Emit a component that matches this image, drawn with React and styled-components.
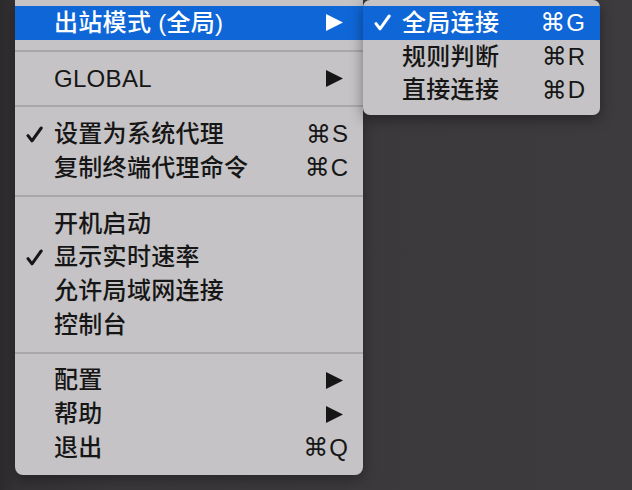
import styled, { createGlobalStyle } from 'styled-components'

const GlobalStyle = createGlobalStyle`
  html, body {
    margin: 0;
    padding: 0;
    background: #3d3a3d;
  }
  #root {
    width: 632px;
    height: 490px;
    overflow: hidden;
  }
`

const mainItems = [
  { label: '出站模式 (全局)', arrow: true, active: true },
  { sep: true },
  { label: 'GLOBAL', arrow: true },
  { sep: true },
  { label: '设置为系统代理', checked: true, key: 'S' },
  { label: '复制终端代理命令', key: 'C' },
  { sep: true },
  { label: '开机启动' },
  { label: '显示实时速率', checked: true },
  { label: '允许局域网连接' },
  { label: '控制台' },
  { sep: true },
  { label: '配置', arrow: true },
  { label: '帮助', arrow: true },
  { label: '退出', key: 'Q' },
]

const subItems = [
  { label: '全局连接', checked: true, key: 'G', active: true },
  { label: '规则判断', key: 'R' },
  { label: '直接连接', key: 'D' },
]

const Check = () => (
  <svg width='17' height='17' viewBox='0 0 17 17'>
    <path d='M2 9.6 L6 14.8 L15.2 2' fill='none' stroke='currentColor' strokeWidth='3' strokeLinecap='round' strokeLinejoin='round' />
  </svg>
)

const Arrow = () => (
  <svg width='17' height='17' viewBox='0 0 17 17'>
    <polygon points='0,0 17,8.5 0,17' fill='currentColor' />
  </svg>
)

const MenuItems = ({ items, gap }) =>
  items.map((item, i) =>
    item.sep ? (
      <Separator key={i} />
    ) : (
      <Row key={i} active={item.active}>
        <CheckSlot>{item.checked && <Check />}</CheckSlot>
        <Label>{item.label}</Label>
        {item.key && (
          <Shortcut gap={gap}>
            <Cmd>⌘</Cmd>
            {item.key}
          </Shortcut>
        )}
        {item.arrow && (
          <ArrowSlot>
            <Arrow />
          </ArrowSlot>
        )}
      </Row>
    )
  )

const App = () => {
  return (
    <>
      <GlobalStyle />
      <Desktop>
        <MainMenu>
          <MenuItems items={mainItems} />
        </MainMenu>
        <SubMenu>
          <MenuItems items={subItems} gap={38} />
        </SubMenu>
      </Desktop>
    </>
  )
}

const Desktop = styled.div`
  width: 632px;
  height: 490px;
  display: flex;
  align-items: flex-start;
  padding-left: 15px;
  box-sizing: border-box;
  background: linear-gradient(90deg, #2d2a2d 0px, #353235 15px, #3b383b 120px, #3e3b3e 632px);
  font-family: 'Liberation Sans', 'Noto Sans CJK SC', sans-serif;
  font-size: 24px;
  font-weight: 500;
  color: #161616;
`

const MainMenu = styled.div`
  width: 348px;
  padding: 6px 0 10px;
  background: #c5c3c5;
  border-radius: 0 0 8px 8px;
  box-shadow: 0 4px 14px rgba(0, 0, 0, 0.35);
  position: relative;
`

const SubMenu = styled.div`
  width: 237px;
  padding: 6px 0 8px;
  background: #c5c3c5;
  border-radius: 7px;
  box-shadow: 0 4px 14px rgba(0, 0, 0, 0.4);
  position: relative;
  z-index: 1;
`

const Row = styled.div`
  height: 33.7px;
  display: flex;
  align-items: center;
  padding-right: 15px;
  background: ${({ active }) => (active ? '#0f66d7' : 'transparent')};
  color: ${({ active }) => (active ? '#ffffff' : '#161616')};
`

const CheckSlot = styled.div`
  width: 39px;
  flex: none;
  display: flex;
  justify-content: flex-start;
  padding-left: 11px;
  box-sizing: border-box;
  svg {
    display: block;
  }
`

const Label = styled.span`
  flex: 1;
  white-space: nowrap;
  line-height: 1;
  letter-spacing: 0.3px;
`

const Shortcut = styled.span`
  display: flex;
  align-items: center;
  line-height: 1;
  margin-left: ${({ gap }) => (gap ? `${gap}px` : '0')};
`

const Cmd = styled.span`
  font-family: 'DejaVu Sans', sans-serif;
  font-size: 25px;
  font-weight: 400;
  margin-right: 1px;
`

const ArrowSlot = styled.span`
  display: flex;
  margin-right: 5px;
  svg {
    display: block;
  }
`

const Separator = styled.div`
  height: 22px;
  display: flex;
  align-items: center;
  &::before {
    content: '';
    flex: 1;
    height: 2px;
    background: #a9a7a9;
  }
`

export default App
